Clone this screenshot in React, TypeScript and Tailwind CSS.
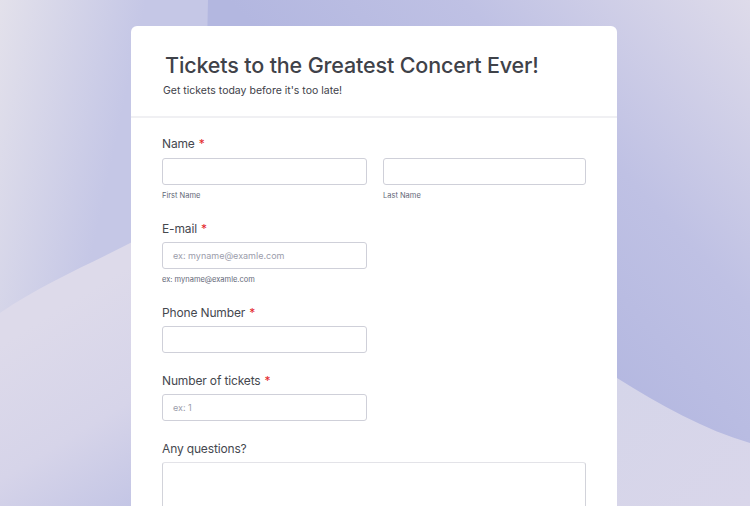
import React from "react";

function Background() {
  return (
    <svg className="absolute inset-0 h-full w-full" viewBox="0 0 750 506" preserveAspectRatio="none">
      <defs>
        <linearGradient id="bgL" gradientUnits="userSpaceOnUse" x1="0" y1="0" x2="140" y2="30">
          <stop offset="0" stopColor="#e3e1eb" />
          <stop offset="1" stopColor="#c5c7e6" />
        </linearGradient>
        <linearGradient id="lowL" gradientUnits="userSpaceOnUse" x1="40" y1="320" x2="150" y2="500">
          <stop offset="0" stopColor="#dddaea" />
          <stop offset="0.55" stopColor="#d6d4e9" />
          <stop offset="1" stopColor="#c3c5e5" />
        </linearGradient>
        <linearGradient id="blob" gradientUnits="userSpaceOnUse" x1="470" y1="260" x2="750" y2="0">
          <stop offset="0" stopColor="#b3b7e0" />
          <stop offset="0.45" stopColor="#bfc1e4" />
          <stop offset="1" stopColor="#dedbea" />
        </linearGradient>
        <linearGradient id="lowR" gradientUnits="userSpaceOnUse" x1="617" y1="380" x2="750" y2="506">
          <stop offset="0" stopColor="#d5d5e9" />
          <stop offset="1" stopColor="#d9d6ea" />
        </linearGradient>
      </defs>
      <rect width="750" height="506" fill="url(#bgL)" />
      <rect x="400" y="300" width="350" height="206" fill="url(#lowR)" />
      <path d="M0 313 C 45 282 95 262 140 238 L 140 506 H0 Z" fill="url(#lowL)" />
      <path d="M208 0 C 207 40 207 60 210 80 C 240 220 420 300 617 378 C 660 405 705 430 750 443 V0 Z" fill="url(#blob)" />
    </svg>
  );
}

function Label({ text, required }: { text: string; required?: boolean }) {
  return (
    <div className="h-[18px] text-[12px] leading-[18px] tracking-[-0.15px] text-[#45484f]">
      {text}
      {required && <span className="ml-[4px] text-[#e3262b]">*</span>}
    </div>
  );
}

function Input({ placeholder, w = "w-[205px]" }: { placeholder?: string; w?: string }) {
  return (
    <div className={`${w} flex h-[27px] items-center rounded-[3px] border border-[#cfd0d9] bg-white pl-[10px] text-[9px] text-[#9b9dab]`}>
      {placeholder}
    </div>
  );
}

function Sub({ text }: { text: string }) {
  return <div className="mt-[5px] text-[7.5px] leading-[11px] text-[#636777]">{text}</div>;
}

export default function App() {
  return (
    <div
      className="relative h-[506px] w-[750px] overflow-hidden"
      style={{ fontFamily: "Inter, 'Noto Sans', sans-serif" }}
    >
      <Background />
      <div className="relative ml-[131px] mt-[26px] w-[486px] rounded-[6px] bg-white">
        <div className="px-[34px] pb-[18px] pt-[24px]">
          <h1 className="text-[21.5px] font-medium leading-[30px] tracking-[-0.15px] text-[#3f4249]">
            Tickets to the Greatest Concert Ever!
          </h1>
          <p className="-ml-[2px] mt-[4px] text-[10.5px] leading-[14px] text-[#3e4149]">
            Get tickets today before it's too late!
          </p>
        </div>
        <div className="h-[2px] bg-[#f0f0f3]" />
        <div className="flex flex-col px-[31px] pb-[40px] pt-[17px]">
          <Label text="Name" required />
          <div className="mt-[5px] flex gap-[16px]">
            <div>
              <Input />
              <Sub text="First Name" />
            </div>
            <div>
              <Input w="w-[203px]" />
              <Sub text="Last Name" />
            </div>
          </div>
          <div className="mt-[19px]">
            <Label text="E-mail" required />
            <div className="mt-[4px]">
              <Input placeholder="ex: myname@examle.com" />
            </div>
            <Sub text="ex: myname@examle.com" />
          </div>
          <div className="mt-[19px]">
            <Label text="Phone Number" required />
            <div className="mt-[4px]">
              <Input />
            </div>
          </div>
          <div className="mt-[19px]">
            <Label text="Number of tickets" required />
            <div className="mt-[4px]">
              <Input placeholder="ex: 1" />
            </div>
          </div>
          <div className="mt-[19px]">
            <Label text="Any questions?" />
            <div className="mt-[4px] h-[90px] w-[424px] rounded-[3px] border border-[#d2d3da] border-t-[#e3e3e8] bg-white" />
          </div>
        </div>
      </div>
    </div>
  );
}
